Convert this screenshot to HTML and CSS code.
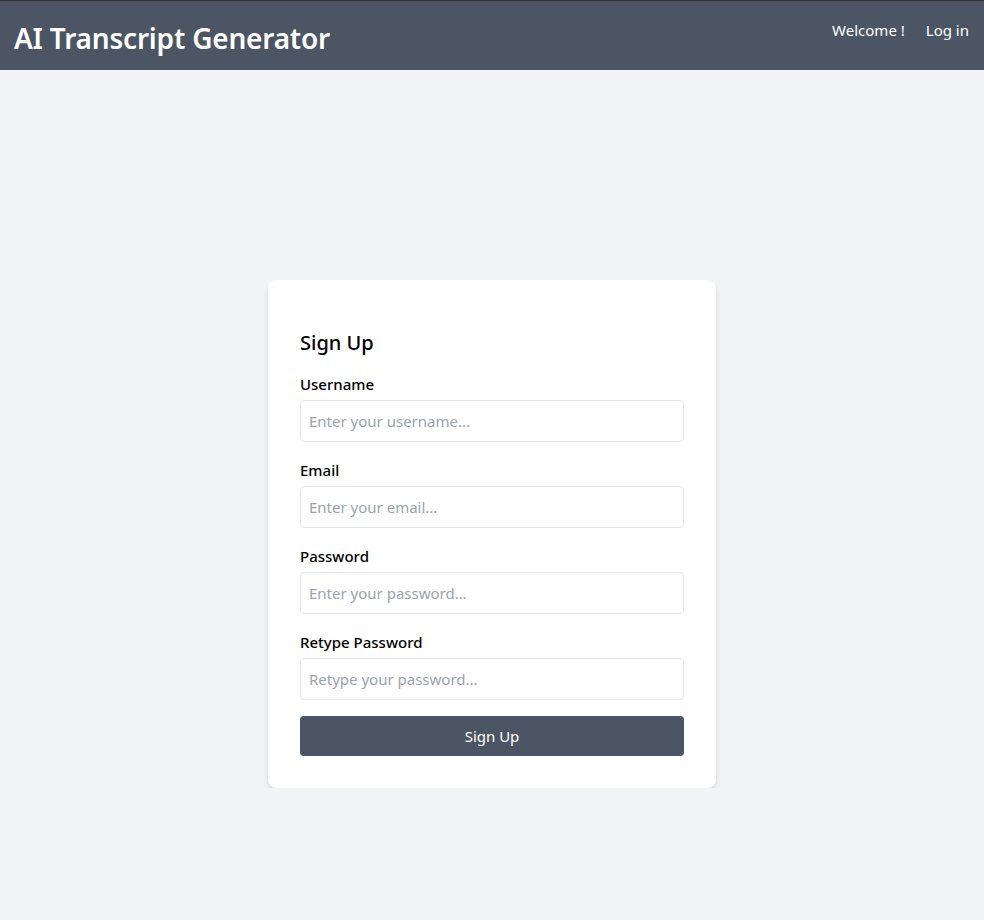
FILE: index.html
```html
<!DOCTYPE html>
<html lang="en">
<head>
<meta charset="utf-8">
<title>AI Transcript Generator</title>
<link rel="stylesheet" href="styles.css">
</head>
<body>
<header class="topbar">
  <h1 class="brand">AI Transcript Generator</h1>
  <nav class="nav">
    <span class="nav-item">Welcome !</span>
    <a class="nav-item" href="#">Log in</a>
  </nav>
</header>
<main class="main">
  <form class="card">
    <h2 class="card-title">Sign Up</h2>
    <div class="field">
      <label class="label" for="u">Username</label>
      <input class="input" id="u" type="text" placeholder="Enter your username...">
    </div>
    <div class="field">
      <label class="label" for="e">Email</label>
      <input class="input" id="e" type="email" placeholder="Enter your email...">
    </div>
    <div class="field">
      <label class="label" for="p">Password</label>
      <input class="input" id="p" type="password" placeholder="Enter your password...">
    </div>
    <div class="field">
      <label class="label" for="r">Retype Password</label>
      <input class="input" id="r" type="password" placeholder="Retype your password...">
    </div>
    <button class="btn" type="button">Sign Up</button>
  </form>
</main>
</body>
</html>
```
FILE: styles.css
```css
* { box-sizing: border-box; }
html, body {
  margin: 0;
  padding: 0;
  background: #f3f4f6;
  font-family: "Noto Sans", "Open Sans", sans-serif;
  color: #111;
}
.topbar {
  height: 70px;
  background: #4b5563;
  border-top: 1px solid #2e2e2e;
  display: flex;
  justify-content: space-between;
  align-items: flex-start;
  padding: 0 15px 0 14px;
  color: #fff;
}
.brand {
  margin: 0;
  font-size: 28px;
  font-weight: 600;
  line-height: 36px;
  padding-top: 19px;
  letter-spacing: -0.2px;
}
.nav {
  display: flex;
  gap: 21px;
  padding-top: 17px;
  font-size: 15px;
  line-height: 24px;
}
.nav-item { color: #fff; text-decoration: none; }
.main {
  padding-top: 210px;
  display: flex;
  justify-content: center;
}
.card {
  width: 448px;
  background: #fff;
  border-radius: 8px;
  box-shadow: 0 4px 6px -1px rgba(0,0,0,0.14), 0 2px 4px -2px rgba(0,0,0,0.12);
  padding: 49px 32px 32px;
}
.card-title {
  margin: 0 0 15px;
  font-size: 20px;
  line-height: 28px;
  font-weight: 500;
  color: #000;
}
.field { margin-bottom: 16px; }
.label {
  display: block;
  font-size: 15px;
  line-height: 24px;
  font-weight: 500;
  color: #000;
  margin-bottom: 4px;
}
.input {
  display: block;
  width: 100%;
  height: 42px;
  border: 1px solid #e5e7eb;
  border-radius: 4px;
  padding: 0 8px;
  font-family: inherit;
  font-size: 15px;
  color: #111;
  background: #fff;
  outline: none;
}
.input::placeholder { color: #9ca3af; }
.btn {
  display: block;
  width: 100%;
  height: 40px;
  border: 0;
  border-radius: 4px;
  background: #4b5563;
  color: #fff;
  font-family: inherit;
  font-size: 15px;
  cursor: pointer;
}
```
